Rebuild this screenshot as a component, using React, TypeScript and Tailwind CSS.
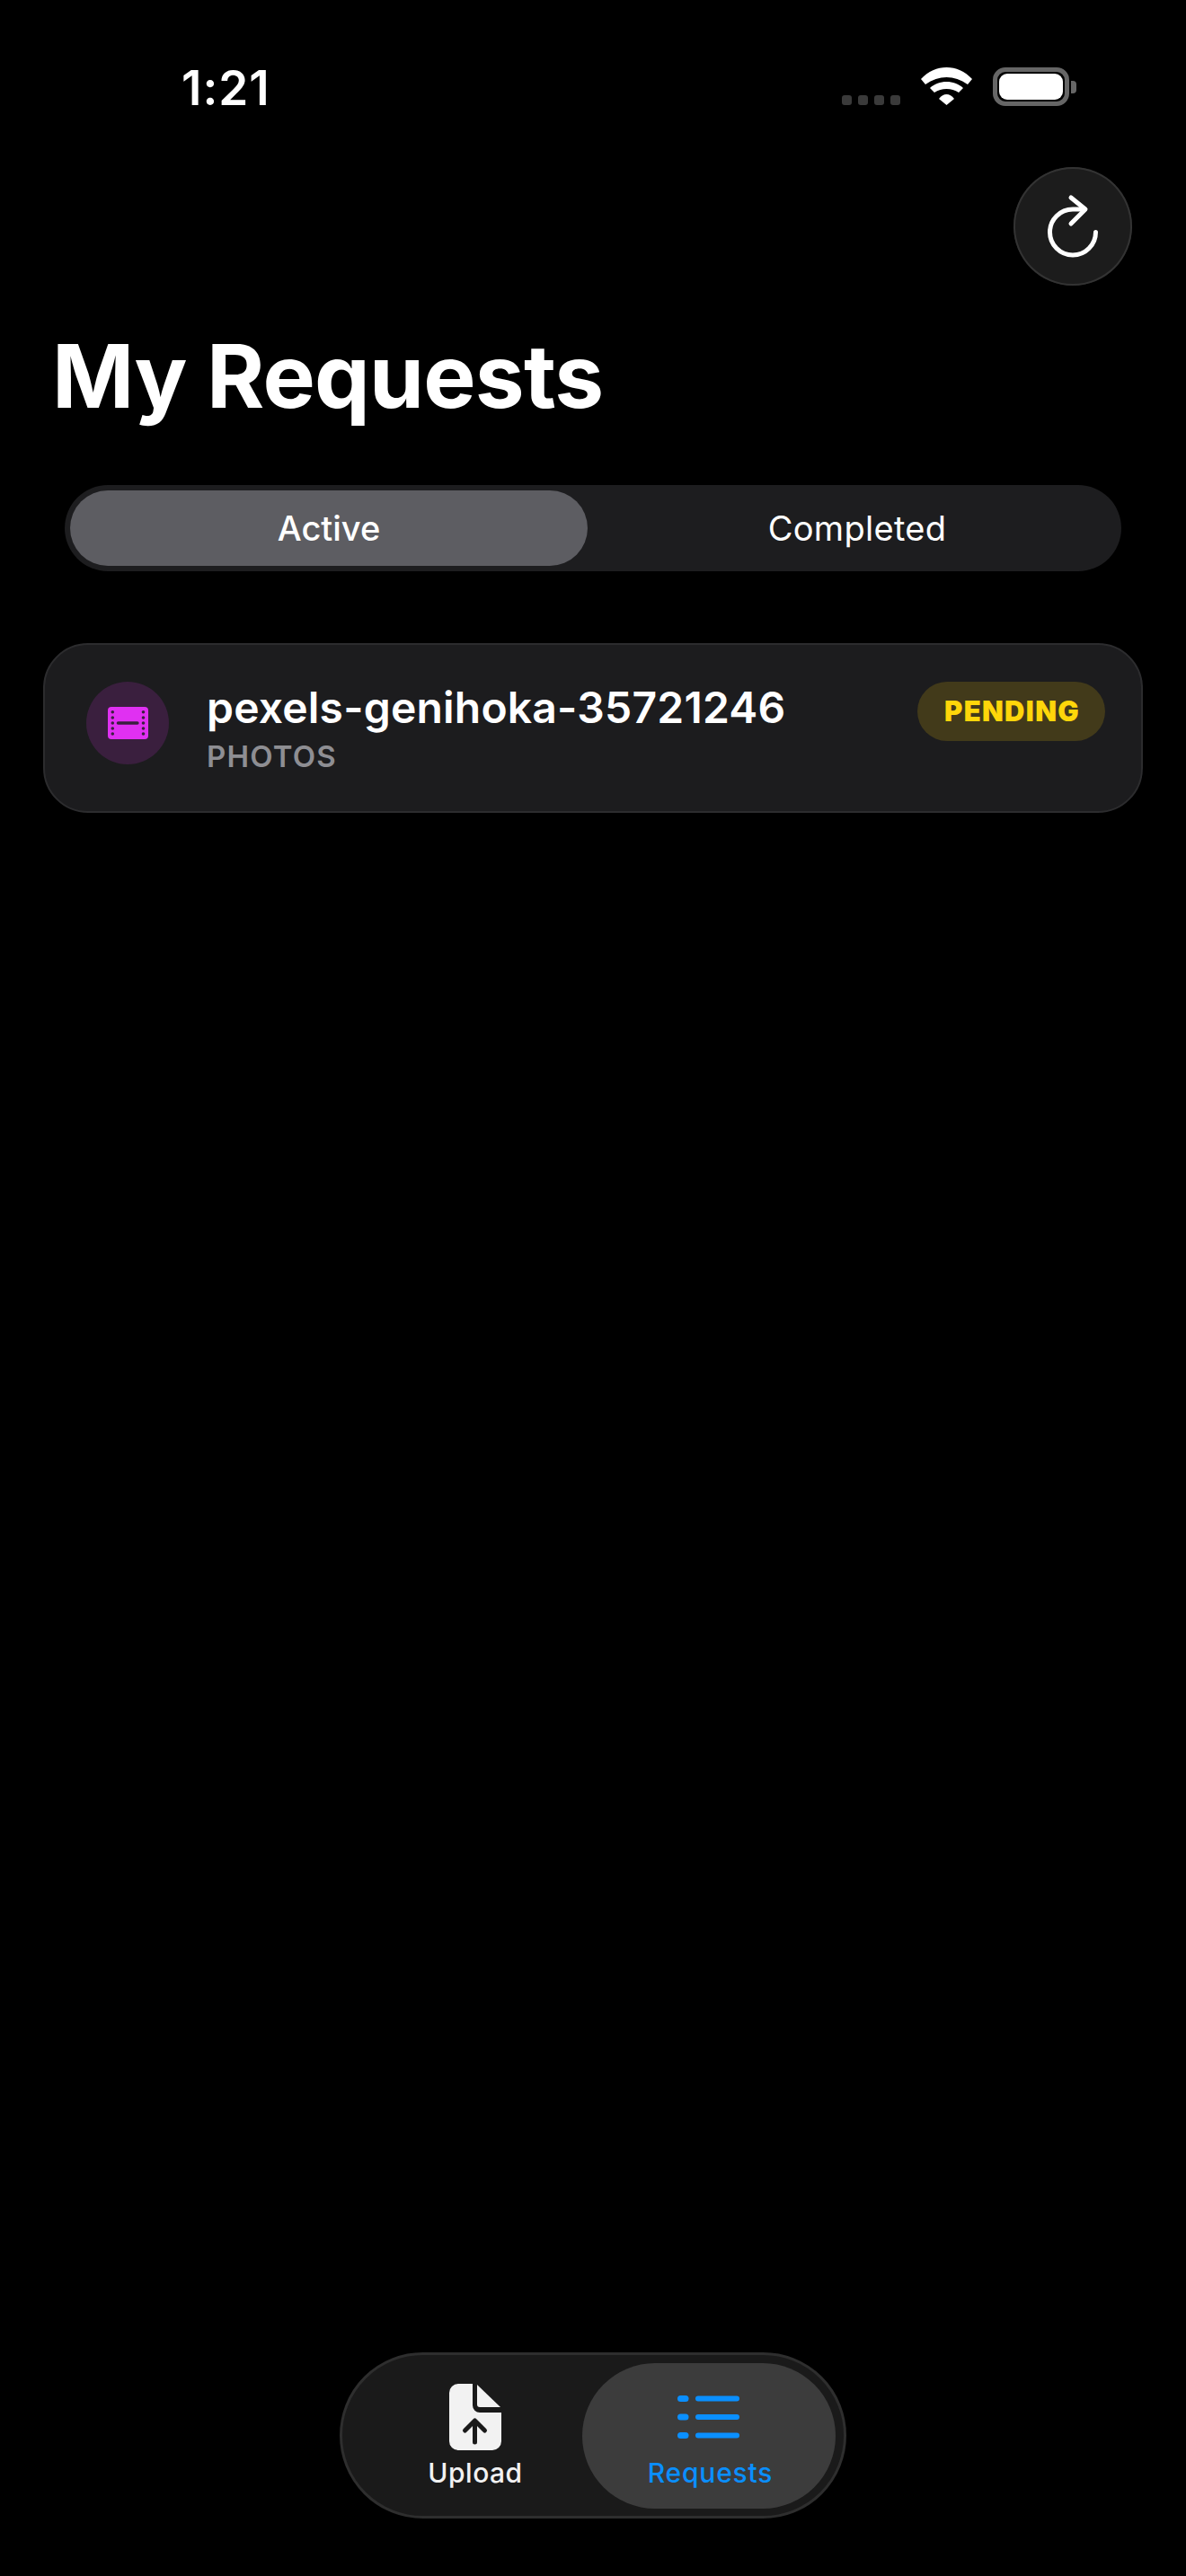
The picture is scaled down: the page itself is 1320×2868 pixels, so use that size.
const font = "font-['Inter','Liberation_Sans',sans-serif]";

function Wifi() {
  return (
    <svg width="57" height="42" viewBox="0 0 57 42" fill="#fff">
      <path d="M0 13 C16 -4.3 41 -4.3 57 13 L52 19 C37 8.3 20 8.3 5 19 Z" />
      <path d="M10 23 C20 13.7 37 13.7 47 23 L42 28 C34 22.7 23 22.7 15 28 Z" />
      <path d="M20 35 C25 28.3 32 28.3 37 35 L28.5 42 Z" />
    </svg>
  );
}

function Battery() {
  return (
    <div className="flex items-center gap-[2px]">
      <div className="flex h-[43px] w-[85px] rounded-[14px] border-[5px] border-[#666666] p-[2px]">
        <div className="flex-1 rounded-[9px] bg-white" />
      </div>
      <div className="h-[14px] w-[6px] rounded-r-[4px] bg-[#666666]" />
    </div>
  );
}

function RefreshIcon() {
  return (
    <svg width="132" height="132" viewBox="0 0 132 132" fill="none" stroke="#fff" strokeWidth="5" strokeLinecap="round" strokeLinejoin="round">
      <path d="M91.5 72.5 A25.5 25.5 0 1 1 66 47 H78" />
      <path d="M64 34 L80 47 L64 63" />
    </svg>
  );
}

function FilmIcon() {
  const ys = [5.7, 12, 18, 24, 30];
  return (
    <svg width="45" height="36" viewBox="0 0 45 36">
      <rect width="45" height="36" rx="4" fill="#e030f2" />
      {ys.map((y) => (
        <g key={y} fill="#3a1f3e">
          <circle cx="5.3" cy={y} r="1.8" />
          <circle cx="39.5" cy={y} r="1.8" />
        </g>
      ))}
      <rect x="9.7" y="16.2" width="25" height="3.6" rx="1.8" fill="#3a1f3e" />
    </svg>
  );
}

function UploadIcon() {
  return (
    <svg width="58" height="74" viewBox="0 0 58 74" fill="#f2f2f2">
      <path d="M10 0 H26 V24 a8 8 0 0 0 8 8 H58 V64 a10 10 0 0 1 -10 10 H10 a10 10 0 0 1 -10 -10 V10 a10 10 0 0 1 10 -10 Z" />
      <path d="M31 1 V23 a3 3 0 0 0 3 3 H57 Z" />
      <path d="M28.5 65 V42 M17.5 52 L28.5 41 L39.5 52" fill="none" stroke="#1a1a1a" strokeWidth="5" strokeLinecap="round" strokeLinejoin="round" />
    </svg>
  );
}

function ListIcon() {
  return (
    <svg width="70" height="48" viewBox="0 0 70 48" fill="#0a8fff">
      <rect x="0" y="0" width="12.5" height="7" rx="3.5" />
      <rect x="20" y="0.5" width="49" height="6" rx="3" />
      <rect x="0" y="20.5" width="12.5" height="7" rx="3.5" />
      <rect x="20" y="21" width="49" height="6" rx="3" />
      <rect x="0" y="41" width="12.5" height="7" rx="3.5" />
      <rect x="20" y="41.5" width="49" height="6" rx="3" />
    </svg>
  );
}

export default function App() {
  return (
    <div className={`${font} flex h-[2868px] w-[1320px] flex-col bg-black text-white`}>
      <div className="flex h-[186px] items-start justify-between pl-[202px] pr-[122px] pt-[66px]">
        <span className="text-[53px] leading-[64px] font-semibold tracking-[1px]">1:21</span>
        <div className="flex items-start pt-[9px]">
          <div className="mt-[31px] flex gap-[7px]">
            {[0, 1, 2, 3].map((i) => (
              <div key={i} className="h-[11px] w-[11px] rounded-[3px] bg-[#3a3a3a]" />
            ))}
          </div>
          <div className="ml-[23px]"><Wifi /></div>
          <div className="ml-[23px]"><Battery /></div>
        </div>
      </div>

      <div className="flex justify-end pr-[60px]">
        <button className="h-[132px] w-[132px] rounded-full bg-[#1c1c1c] ring-2 ring-inset ring-[#333333]">
          <RefreshIcon />
        </button>
      </div>

      <h1 className="mt-[43px] pl-[58px] text-[98px] leading-[116px] font-bold tracking-[-0.8px]">My Requests</h1>

      <div className="mx-[72px] mt-[63px] flex h-[96px] rounded-full bg-[#1d1d1f] p-[6px]">
        <div className="flex w-[576px] items-center justify-center rounded-full bg-[#5d5d62] text-[38px] font-medium">Active</div>
        <div className="flex flex-1 items-center justify-center pl-[12px] text-[38px] font-normal tracking-[0.3px]">Completed</div>
      </div>

      <div className="mx-[48px] mt-[80px] flex h-[189px] items-start rounded-[50px] border-2 border-[#2c2c2e] bg-[#1c1c1e] pl-[46px] pr-[40px] pt-[41px]">
        <div className="flex h-[92px] w-[92px] items-center justify-center rounded-full bg-[#3a1f3e]">
          <FilmIcon />
        </div>
        <div className="ml-[42px] flex flex-col pt-[1px]">
          <span className="text-[48px] leading-[56px] font-semibold tracking-[0.2px]">pexels-genihoka-35721246</span>
          <span className="mt-[6px] text-[33px] leading-[40px] font-semibold tracking-[1.2px] text-[#8e8e93]">PHOTOS</span>
        </div>
        <div className="ml-auto flex h-[66px] w-[209px] items-center justify-center rounded-full bg-[#423a1a] pl-[2px] text-[31px] font-black tracking-[1.3px] text-[#ffd60a]">PENDING</div>
      </div>

      <div className="mb-[64px] mt-auto flex h-[185px] w-[564px] items-center self-center rounded-full border-[3px] border-[#2e2e2e] bg-[#1a1a1a] pl-[29px] pr-[9px]">
        <div className="flex h-full w-[238px] flex-col items-center pt-[32px]">
          <UploadIcon />
          <span className="mt-[7px] text-[30px] leading-[36px] font-medium tracking-[0.5px] text-[#f2f2f2]">Upload</span>
        </div>
        <div className="flex h-[162px] flex-1 flex-col items-center rounded-full bg-[#3c3c3c] pt-[36px]">
          <ListIcon />
          <span className="mt-[20px] pl-[3px] text-[30px] leading-[36px] font-medium tracking-[0.8px] text-[#0a8fff]">Requests</span>
        </div>
      </div>
    </div>
  );
}
